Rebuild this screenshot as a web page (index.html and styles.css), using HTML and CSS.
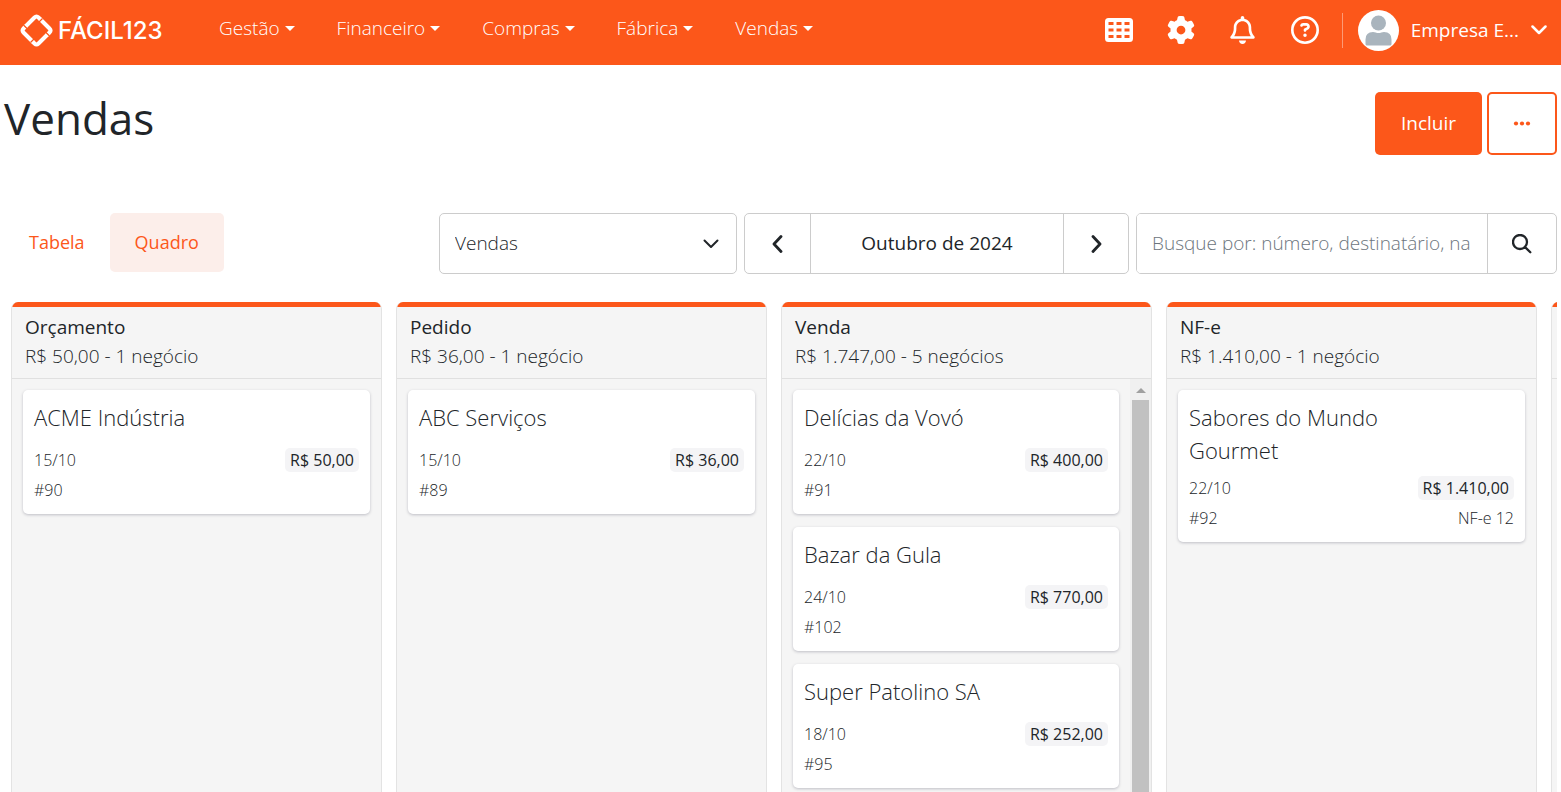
FILE: index.html
```html
<!DOCTYPE html>
<html lang="pt-BR">
<head>
<meta charset="utf-8">
<meta name="viewport" content="width=device-width, initial-scale=1">
<title>Vendas - Fácil123</title>
<link rel="stylesheet" href="styles.css">
</head>
<body>
<header class="topbar">
  <a class="brand" href="#">
    <svg class="brand-mark" viewBox="0 0 33 33" aria-hidden="true">
      <g fill="none" stroke="currentColor" stroke-width="4" stroke-linejoin="round">
        <path d="M5 13 14.500 3.500q2-2 4 0l2.500 2.500"/>
        <path d="M20 5l9.500 9.500q2 2 0 4l-2.500 2.500"/>
        <path d="M28 20 18.500 29.500q-2 2-4 0l-2.500-2.500"/>
        <path d="M13 28l-9.500-9.500q-2-2 0-4l2.500-2.500"/>
      </g>
      <path d="M3.500 11l5 5M18.500 8.500l4-4M24.500 17l5 5M10.500 28.500l4-4" stroke="#fc571a" stroke-width="1.200"/>
    </svg>
    <span class="brand-name">FÁCIL123</span>
  </a>
  <nav class="menu" aria-label="Principal">
    <button class="menu-item" type="button">Gestão<span class="caret"></span></button>
    <button class="menu-item" type="button">Financeiro<span class="caret"></span></button>
    <button class="menu-item" type="button">Compras<span class="caret"></span></button>
    <button class="menu-item" type="button">Fábrica<span class="caret"></span></button>
    <button class="menu-item" type="button">Vendas<span class="caret"></span></button>
  </nav>
  <div class="tools">
    <button class="tool" type="button" aria-label="Aplicativos">
      <svg width="28" height="24" viewBox="0 0 28 24"><path fill="currentColor" fill-rule="evenodd" d="M3.500 0h21A3.500 3.500 0 0 1 28 3.500v17a3.500 3.500 0 0 1-3.500 3.500h-21A3.500 3.500 0 0 1 0 20.500v-17A3.500 3.500 0 0 1 3.500 0zM3.500 4v3h5V4zm8 0v3h5V4zm8 0v3h5V4zm-16 6.500v3h5v-3zm8 0v3h5v-3zm8 0v3h5v-3zM3.500 17v3h5v-3zm8 0v3h5v-3zm8 0v3h5v-3z"/></svg>
    </button>
    <button class="tool" type="button" aria-label="Configurações">
      <svg width="28" height="28" viewBox="0 0 512 512"><path fill="currentColor" d="M495.9 166.600c3.200 8.700 .5 18.400-6.400 24.600l-43.300 39.400c1.100 8.300 1.700 16.800 1.700 25.400s-.6 17.100-1.700 25.400l43.300 39.400c6.900 6.200 9.600 15.900 6.400 24.600c-4.400 11.900-9.700 23.300-15.800 34.300l-4.700 8.100c-6.600 11-14 21.400-22.100 31.200c-5.900 7.200-15.700 9.600-24.500 6.800l-55.700-17.700c-13.400 10.300-28.200 18.900-44 25.400l-12.500 57.100c-2 9.100-9 16.300-18.200 17.800c-13.800 2.300-28 3.500-42.500 3.500s-28.700-1.200-42.500-3.500c-9.200-1.500-16.200-8.700-18.200-17.800l-12.500-57.100c-15.800-6.500-30.600-15.100-44-25.400L83.100 425.900c-8.800 2.800-18.600 .3-24.500-6.800c-8.100-9.800-15.500-20.200-22.100-31.200l-4.700-8.100c-6.100-11-11.400-22.400-15.800-34.300c-3.200-8.700-.5-18.400 6.400-24.600l43.300-39.400C64.600 273.100 64 264.600 64 256s.6-17.100 1.700-25.400L22.400 191.200c-6.900-6.200-9.600-15.900-6.400-24.600c4.400-11.900 9.700-23.300 15.800-34.300l4.700-8.100c6.600-11 14-21.400 22.100-31.200c5.900-7.200 15.700-9.600 24.500-6.800l55.700 17.700c13.400-10.300 28.200-18.900 44-25.400l12.500-57.100c2-9.100 9-16.300 18.200-17.800C227.300 1.200 241.500 0 256 0s28.700 1.200 42.500 3.500c9.200 1.500 16.200 8.700 18.200 17.800l12.500 57.100c15.800 6.500 30.600 15.100 44 25.400l55.700-17.700c8.800-2.800 18.600-.3 24.500 6.800c8.100 9.800 15.500 20.200 22.100 31.200l4.700 8.100c6.100 11 11.400 22.400 15.800 34.300zM256 336a80 80 0 1 0 0-160 80 80 0 1 0 0 160z"/></svg>
    </button>
    <button class="tool" type="button" aria-label="Notificações">
      <svg width="25" height="28" viewBox="0 0 448 512"><path fill="currentColor" d="M224 0c-17.700 0-32 14.300-32 32V51.200C119 66 64 130.600 64 208v25.400c0 45.400-15.500 89.500-43.800 124.900L5.300 377c-5.800 7.200-6.900 17.100-2.900 25.400S14.800 416 24 416H424c9.200 0 17.600-5.300 21.600-13.600s2.900-18.200-2.900-25.400l-14.900-18.600C399.500 322.900 384 278.800 384 233.400V208c0-77.400-55-142-128-156.800V32c0-17.700-14.300-32-32-32zm0 96c61.900 0 112 50.100 112 112v25.400c0 47.900 13.900 94.600 39.700 134.600H72.300C98.100 328 112 281.300 112 233.400V208c0-61.900 50.100-112 112-112zm64 352H224 160c0 17 6.700 33.300 18.700 45.300s28.300 18.700 45.300 18.700s33.300-6.700 45.300-18.700s18.700-28.300 18.700-45.300z"/></svg>
    </button>
    <button class="tool" type="button" aria-label="Ajuda">
      <svg width="28" height="28" viewBox="0 0 512 512"><path fill="currentColor" d="M464 256A208 208 0 1 0 48 256a208 208 0 1 0 416 0zM0 256a256 256 0 1 1 512 0A256 256 0 1 1 0 256zm169.800-90.700c7.900-22.300 29.100-37.300 52.800-37.300h58.300c34.900 0 63.100 28.300 63.100 63.100c0 22.600-12.100 43.500-31.700 54.800L280 264.400c-.2 13-10.900 23.600-24 23.600c-13.300 0-24-10.700-24-24V250.500c0-8.600 4.600-16.500 12.100-20.800l44.300-25.400c4.700-2.700 7.600-7.700 7.600-13.100c0-8.400-6.800-15.100-15.100-15.100H222.600c-3.400 0-6.400 2.100-7.500 5.300l-.4 1.200c-4.400 12.500-18.200 19-30.600 14.600s-19-18.200-14.600-30.600l.4-1.200zM224 352a32 32 0 1 1 64 0 32 32 0 1 1 -64 0z"/></svg>
    </button>
  </div>
  <button class="account" type="button">
    <svg class="avatar" width="41" height="41" viewBox="0 0 41 41" aria-hidden="true"><circle cx="20.500" cy="20.500" r="20.500" fill="#fff"/><circle cx="20.500" cy="13" r="7.500" fill="#a9b4bd"/><path fill="#a9b4bd" d="M7.500 34v-4.500q0-7.500 7.500-7.500 1.500 0 2.700.6 2.800 1 5.600 0 1.200-.6 2.700-.6 7.500 0 7.500 7.500V34q0 1.500-1.500 1.500H9Q7.500 35.500 7.500 34z"/></svg>
    <span class="account-name">Empresa E...</span>
    <svg width="16" height="10" viewBox="0 0 16 10" aria-hidden="true"><path d="M1.500 1.500 8 8l6.500-6.500" fill="none" stroke="currentColor" stroke-width="2.500" stroke-linecap="round" stroke-linejoin="round"/></svg>
  </button>
</header>

<main class="page">
  <div class="page-head">
    <h1 class="page-title">Vendas</h1>
    <div class="actions">
      <button class="btn-primary" type="button">Incluir</button>
      <button class="btn-outline" type="button" aria-label="Mais ações">
        <svg width="18" height="6" viewBox="0 0 18 6"><g fill="currentColor"><circle cx="3" cy="2.500" r="2.100"/><circle cx="9" cy="2.500" r="2.100"/><circle cx="15" cy="2.500" r="2.100"/></g></svg>
      </button>
    </div>
  </div>

  <div class="toolbar">
    <div class="views">
      <button class="view" type="button">Tabela</button>
      <button class="view view-active" type="button">Quadro</button>
    </div>
    <div class="select-wrap">
      <select class="select" aria-label="Tipo"><option>Vendas</option></select>
      <svg class="select-arrow" width="16" height="10" viewBox="0 0 16 10" aria-hidden="true"><path d="M1.500 1.500 8 8l6.500-6.500" fill="none" stroke="currentColor" stroke-width="2" stroke-linecap="round" stroke-linejoin="round"/></svg>
    </div>
    <div class="group period">
      <button class="group-btn" type="button" aria-label="Mês anterior"><svg width="12" height="18" viewBox="0 0 12 18"><path d="M9 1.500 2 9l7 7.500" fill="none" stroke="currentColor" stroke-width="2.800" stroke-linecap="round" stroke-linejoin="round"/></svg></button>
      <button class="group-btn period-label" type="button">Outubro de 2024</button>
      <button class="group-btn" type="button" aria-label="Próximo mês"><svg width="12" height="18" viewBox="0 0 12 18"><path d="M3 1.500 10 9l-7 7.500" fill="none" stroke="currentColor" stroke-width="2.800" stroke-linecap="round" stroke-linejoin="round"/></svg></button>
    </div>
    <form class="group search">
      <input class="search-input" type="text" aria-label="Busca" placeholder="Busque por: número, destinatário, na">
      <button class="group-btn" type="button" aria-label="Buscar"><svg width="20" height="20" viewBox="0 0 20 20"><path d="M12.800 12.800 18.300 18.300M15 8A7 7 0 1 1 1 8a7 7 0 0 1 14 0z" fill="none" stroke="currentColor" stroke-width="2.300" stroke-linecap="round"/></svg></button>
    </form>
  </div>

  <div class="board">
    <section class="column">
      <header class="column-head"><h2 class="column-title">Orçamento</h2><p class="column-sum">R$ 50,00 - 1 negócio</p></header>
      <div class="column-body"><div class="cards">
        <article class="card"><h3 class="card-title">ACME Indústria</h3><div class="card-rows"><div class="row"><span>15/10</span><span class="amount">R$ 50,00</span></div><div class="row"><span>#90</span></div></div></article>
      </div></div>
    </section>
    <section class="column">
      <header class="column-head"><h2 class="column-title">Pedido</h2><p class="column-sum">R$ 36,00 - 1 negócio</p></header>
      <div class="column-body"><div class="cards">
        <article class="card"><h3 class="card-title">ABC Serviços</h3><div class="card-rows"><div class="row"><span>15/10</span><span class="amount">R$ 36,00</span></div><div class="row"><span>#89</span></div></div></article>
      </div></div>
    </section>
    <section class="column">
      <header class="column-head"><h2 class="column-title">Venda</h2><p class="column-sum">R$ 1.747,00 - 5 negócios</p></header>
      <div class="column-body">
        <div class="cards">
          <article class="card"><h3 class="card-title">Delícias da Vovó</h3><div class="card-rows"><div class="row"><span>22/10</span><span class="amount">R$ 400,00</span></div><div class="row"><span>#91</span></div></div></article>
          <article class="card"><h3 class="card-title">Bazar da Gula</h3><div class="card-rows"><div class="row"><span>24/10</span><span class="amount">R$ 770,00</span></div><div class="row"><span>#102</span></div></div></article>
          <article class="card"><h3 class="card-title">Super Patolino SA</h3><div class="card-rows"><div class="row"><span>18/10</span><span class="amount">R$ 252,00</span></div><div class="row"><span>#95</span></div></div></article>
        </div>
        <div class="scrollbar" aria-hidden="true"><span class="scroll-up"></span><span class="scroll-thumb"></span></div>
      </div>
    </section>
    <section class="column">
      <header class="column-head"><h2 class="column-title">NF-e</h2><p class="column-sum">R$ 1.410,00 - 1 negócio</p></header>
      <div class="column-body"><div class="cards">
        <article class="card"><h3 class="card-title">Sabores do Mundo Gourmet</h3><div class="card-rows"><div class="row"><span>22/10</span><span class="amount">R$ 1.410,00</span></div><div class="row"><span>#92</span><span>NF-e 12</span></div></div></article>
      </div></div>
    </section>
    <section class="column"><header class="column-head"></header><div class="column-body"></div></section>
  </div>
</main>
</body>
</html>
```
FILE: styles.css
```css
:root {
  --brand: #fc571a;
  --ink: #212529;
  --line: #cccccc;
}

*, *::before, *::after { box-sizing: border-box; }

body {
  margin: 0;
  height: 100vh;
  display: flex;
  flex-direction: column;
  overflow: hidden;
  background: #fff;
  color: var(--ink);
  font: 300 19px/29px "Open Sans", "Noto Sans", sans-serif;
}

button, input, select { font: inherit; color: inherit; }
button { border: 0; padding: 0; background: none; cursor: pointer; }
h1, h2, h3, p { margin: 0; }
svg { display: block; flex: none; }

.topbar {
  flex: none;
  display: flex;
  align-items: center;
  height: 65px;
  padding: 0 14px 5px 20px;
  background: var(--brand);
  color: #fff;
}

.brand {
  display: flex;
  align-items: center;
  gap: 5px;
  width: 199px;
  color: inherit;
  text-decoration: none;
}
.brand-mark { width: 33px; height: 33px; }
.brand-name { font: 500 24px/33px Inter, Lato, sans-serif; }

.menu { display: flex; gap: 42px; padding-bottom: 3px; }
.menu-item { display: flex; align-items: center; gap: 5px; white-space: nowrap; }
.caret { border: 5px solid transparent; border-top-color: currentColor; border-bottom: 0; }

.tools { display: flex; gap: 34px; margin-left: auto; padding-right: 23px; }
.tool { display: flex; align-items: center; justify-content: center; width: 28px; height: 33px; }

.account {
  display: flex;
  align-items: center;
  gap: 12px;
  padding-left: 15px;
  border-left: 1px solid #fd9a75;
  height: 35px;
  font-weight: 500;
}

.page { flex: 1; min-height: 0; display: flex; flex-direction: column; padding: 0 4px; }

.page-head { display: flex; justify-content: space-between; align-items: flex-start; padding-top: 27px; }
.page-title { font-size: 44px; line-height: 52px; font-weight: 400; }
.actions { display: flex; gap: 5px; }
.btn-primary, .btn-outline { height: 63px; border-radius: 5px; }
.btn-primary { padding: 0 26px; background: var(--brand); color: #fff; font-weight: 500; }
.btn-outline { display: grid; place-items: center; width: 70px; border: 2px solid var(--brand); color: var(--brand); }

.toolbar {
  display: grid;
  grid-template-columns: 428fr 298fr 385fr 421fr;
  gap: 7px;
  margin-top: 58px;
}
.views { display: flex; align-items: flex-start; }
.view { height: 59px; padding: 0 25px; border-radius: 5px; color: var(--brand); font-size: 18px; font-weight: 500; }
.view-active { background: #fceeea; }

.select-wrap { display: grid; align-items: center; }
.select {
  grid-area: 1 / 1;
  width: 100%;
  height: 61px;
  padding: 0 15px;
  appearance: none;
  border: 1px solid var(--line);
  border-radius: 5px;
  background: #fff;
}
.select-arrow { grid-area: 1 / 1; justify-self: end; margin-right: 18px; pointer-events: none; }

.group { display: flex; height: 61px; border: 1px solid var(--line); border-radius: 5px; overflow: hidden; }
.group-btn { display: grid; place-items: center; flex: none; width: 65px; }
.group-btn + .group-btn { border-left: 1px solid var(--line); }
.group .period-label { flex: 1; font-weight: 500; }
.search-input { flex: 1; min-width: 0; border: 0; padding: 0 15px; background: #fff; outline: 0; }
.search-input::placeholder { color: #6c757d; opacity: 1; }
.search .group-btn { width: 69px; border-left: 1px solid var(--line); }

.board { flex: 1; min-height: 0; display: flex; gap: 14px; margin-top: 28px; padding-left: 7px; overflow: hidden; }
.column {
  flex: none;
  display: flex;
  flex-direction: column;
  width: 371px;
  border: 1px solid #e3e3e3;
  border-width: 0 1px;
  border-radius: 7px 7px 0 0;
  background: #f5f5f5;
  overflow: hidden;
}
.column-head { flex: none; height: 77px; padding: 6px 13px 0; border-top: 5px solid var(--brand); border-bottom: 1px solid #e0e0e0; }
.column-title { font-size: 19px; line-height: 29px; font-weight: 500; }
.column-body { flex: 1; min-height: 0; display: flex; }
.cards { flex: 1; display: flex; flex-direction: column; gap: 13px; padding: 11px 11px 0; }

.card {
  flex: none;
  display: flex;
  flex-direction: column;
  min-height: 124px;
  padding: 11px 11px 9px;
  border-radius: 5px;
  background: #fff;
  box-shadow: 0 1px 3px rgba(30, 30, 60, .25);
}
.card-title { font-size: 22px; line-height: 33px; font-weight: 300; padding-right: 80px; }
.card-rows { margin-top: auto; padding-top: 6px; font-size: 16px; }
.row { display: flex; justify-content: space-between; align-items: center; height: 30px; }
.amount { padding: 0 5px; border-radius: 5px; background: #f4f4f6; line-height: 24px; font-weight: 400; }

.scrollbar { flex: none; display: flex; flex-direction: column; align-items: center; width: 21px; background: #f0f0f0; }
.scroll-up { margin: 9px 0 7px; border: 5px solid transparent; border-bottom-color: #a0a0a0; border-top: 0; }
.scroll-thumb { flex: 1; width: 17px; background: #c1c1c1; }
```
